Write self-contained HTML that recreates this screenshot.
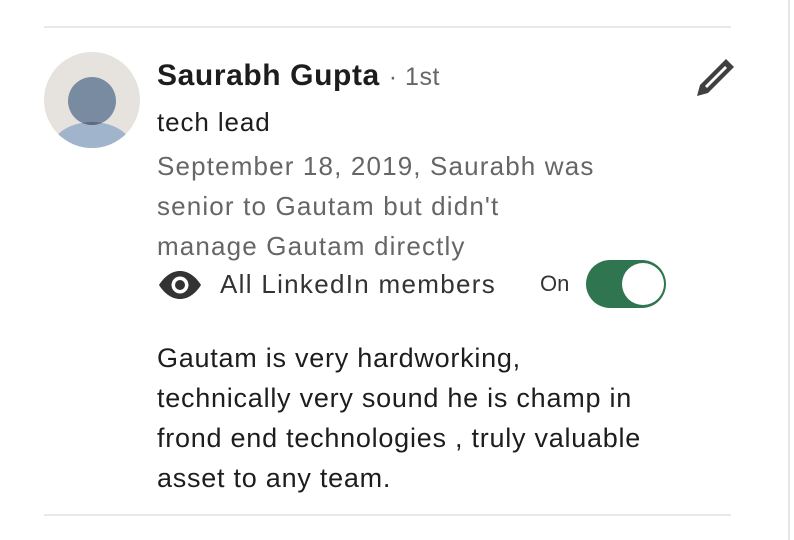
<!DOCTYPE html>
<html><head><meta charset="utf-8"><style>
body{margin:0;width:794px;height:540px;background:#fff;position:relative;overflow:hidden;font-family:"Liberation Sans",Arial,sans-serif;}
.abs{position:absolute;white-space:nowrap;}
.line{position:absolute;left:44px;width:687px;height:2px;background:#e8e8e8;}
.g{color:#666;font-size:26px;letter-spacing:1.15px;}
.b{color:#1d1d1d;font-size:27px;letter-spacing:0.75px;}
</style></head><body>
<div class="line" style="top:26px"></div>
<div class="line" style="top:514px"></div>
<div style="position:absolute;left:788px;top:0;width:2px;height:540px;background:#e6e6e6"></div>
<svg class="abs" style="left:44px;top:52px" width="96" height="96" viewBox="0 0 96 96">
<defs><clipPath id="c"><circle cx="48" cy="48" r="48"/></clipPath><clipPath id="h"><circle cx="48" cy="49" r="24"/></clipPath></defs>
<circle cx="48" cy="48" r="48" fill="#e6e3df"/>
<g clip-path="url(#c)">
<ellipse cx="48" cy="100" rx="42" ry="30" fill="#a0b4cb"/>
<circle cx="48" cy="49" r="24" fill="#788ba0"/>
<ellipse cx="48" cy="100" rx="42" ry="30" fill="#5d6b7c" clip-path="url(#h)"/>
</g></svg>
<div class="abs" style="left:157px;top:59px;font-size:30px;font-weight:bold;color:#1d1d1d;letter-spacing:0.6px">Saurabh Gupta <span style="font-weight:normal;color:#666;font-size:25px;letter-spacing:0.5px">· 1st</span></div>
<div class="abs" style="left:157px;top:107px;font-size:26px;color:#1d1d1d;letter-spacing:0.9px">tech lead</div>
<div class="abs g" style="left:157px;top:146px;line-height:40px">September 18, 2019, Saurabh was<br>senior to Gautam but didn't<br>manage Gautam directly</div>
<svg class="abs" style="left:696px;top:57px" width="40" height="40" viewBox="0 0 40 40">
<path d="M30 2 L38 10 L12 36 L1 39 L4 28 Z" fill="#404040"/>
<path d="M29 9 L31 11 L11 31 L9 29 Z" fill="#fff"/>
</svg>
<svg class="abs" style="left:158px;top:271px" width="44" height="28" viewBox="0 0 44 28">
<path d="M1 14 C8 3 16 0 22 0 C28 0 36 3 43 14 C36 25 28 28 22 28 C16 28 8 25 1 14 Z" fill="#333"/>
<circle cx="22" cy="14" r="8.5" fill="#fff"/><circle cx="22" cy="14" r="5" fill="#333"/>
</svg>
<div class="abs" style="left:220px;top:269px;font-size:26px;color:#333;letter-spacing:1.3px">All LinkedIn members</div>
<div class="abs" style="left:540px;top:271px;font-size:22px;color:#333">On</div>
<div class="abs" style="left:586px;top:260px;width:80px;height:48px;border-radius:24px;background:#2f7650"></div>
<div class="abs" style="left:622px;top:263px;width:42px;height:42px;border-radius:50%;background:#fff"></div>
<div class="abs b" style="left:157px;top:338px;line-height:40px">Gautam is very hardworking,<br>technically very sound he is champ in<br>frond end technologies , truly valuable<br>asset to any team.</div>
</body></html>
